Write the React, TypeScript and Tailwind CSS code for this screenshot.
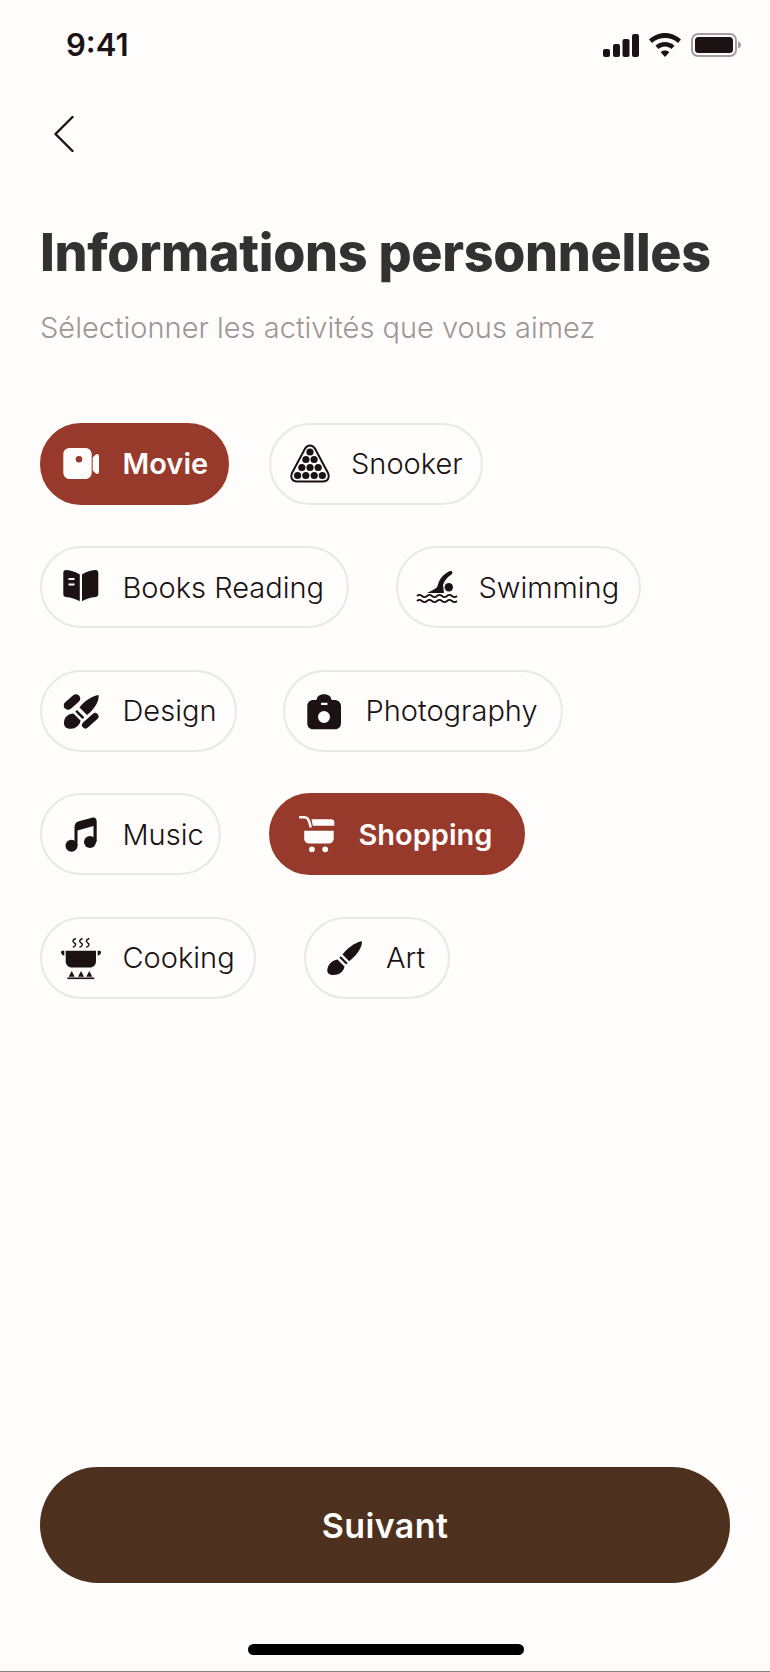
import React from "react";

const INK = "#1a1213";
const BG = "#fefdfc";

function Svg({ children }: { children: React.ReactNode }) {
  return (
    <svg width="40" height="40" viewBox="0 0 40 40" className="shrink-0 overflow-visible" aria-hidden="true">
      {children}
    </svg>
  );
}

const MovieIcon = () => (
  <Svg>
    <path fillRule="evenodd" fill={BG} d="M9 4H24C28 4 30.7 6.7 30.7 10.500V28.500C30.700 32.300 28 35 24 35H9C5 35 2.300 32.300 2.300 28.500V10.500C2.300 6.700 5 4 9 4ZM18 12A3.300 3.300 0 1 0 18 18.600A3.300 3.300 0 1 0 18 12Z" />
    <path fill={BG} d="M31.700 13.500L34.500 10.800C36.500 9.200 38 10.300 38 12.500V27.500C38 29.700 36.500 30.800 34.500 29.200L31.700 26.500Z" />
  </Svg>
);

const SnookerIcon = () => {
  const rows = [
    { y: 8, xs: [20] },
    { y: 15.5, xs: [15.9, 24.1] },
    { y: 23.5, xs: [11.800, 20, 28.200] },
    { y: 31.5, xs: [7.600, 15.800, 24.200, 32.400] },
  ];
  return (
    <Svg>
      <path fill="none" stroke={INK} strokeWidth="2" d="M20 1.500C17.500 1.500 15.800 3.200 14.800 5L2 29C0 33 2 37.500 7 37.500H33C38 37.500 40 33 38 29L25.200 5C24.200 3.200 22.500 1.500 20 1.500Z" />
      {rows.map((r) => r.xs.map((x) => <circle key={`${x}-${r.y}`} cx={x} cy={r.y} r="3.600" fill={INK} />))}
    </Svg>
  );
};

const BookIcon = () => (
  <Svg>
    <path fillRule="evenodd" fill={INK} d="M5.500 3C10 3.500 15 5 18.800 7.500V34.300C15 32 10 30.500 5 30C3.300 29.800 2.300 28.800 2.300 27V6C2.300 4 3.500 2.800 5.500 3ZM7.500 11V13H13.500V11ZM7.500 16.500V18.500H13.500V16.500Z" />
    <path fill={INK} d="M34.100 3C29.500 3.500 24.500 5 21 7.500V34.300C24.500 32 29.500 30.500 34.500 30C36.300 29.800 37.300 28.800 37.300 27V6C37.300 4 36 2.800 34.100 3Z" />
  </Svg>
);

const SwimIcon = () => (
  <Svg>
    <circle cx="31.800" cy="20.300" r="4.200" fill={INK} />
    <path fill={INK} d="M34.500 7.500C31 9.500 27.500 13 26 18L27 26H10L16 23C19 21.500 20.500 20 21 17.500C22.500 12 26 7.500 32 4.500C35 3 36.500 6 34.500 7.500Z" />
    <path fill="none" stroke={INK} strokeWidth="1.800" d="M0 29Q2.500 26.800 5 29T10 29T15 29T20 29T25 29T30 29T35 29T40 29" />
    <path fill="none" stroke={INK} strokeWidth="1.800" d="M0 34Q2.500 31.800 5 34T10 34T15 34T20 34T25 34T30 34T35 34T40 34" />
  </Svg>
);

const DesignIcon = () => (
  <Svg>
    <path stroke={INK} strokeWidth="8.500" strokeLinecap="round" d="M7 14.500L15 7.500" />
    <path stroke={INK} strokeWidth="7" strokeLinecap="round" d="M24.500 34L34 25.500" />
    <path fill={INK} d="M37.500 4C38.500 10 33.500 18 26 24L18.500 16.500C23 10 31 5 37.500 4Z" />
    <path fill={INK} d="M16 19L23.300 26.300L21.500 28L14.300 20.800Z" />
    <path fill={INK} d="M12.500 22.500L19.500 29.500C19 34 15 37.800 9.500 37.800C5 37.800 2.500 35 3 31C3.500 26 7.500 22.500 12.500 22.500Z" />
  </Svg>
);

const CameraIcon = () => (
  <Svg>
    <path fillRule="evenodd" fill={INK} d="M12.500 9C13 5.500 15.500 3.300 20 3.300C24.500 3.300 27 5.500 27.500 9H30.500C34.500 9 37 11.500 37 15.500V32C37 36 34.500 38.300 30.500 38.300H9.500C5.500 38.300 3.300 36 3.300 32V15.500C3.300 11.500 5.500 9 9.500 9ZM17 11.700V14H23.500V11.700ZM20 20A6 6 0 1 0 20 32A6 6 0 1 0 20 20Z" />
  </Svg>
);

const MusicIcon = () => (
  <Svg>
    <circle cx="10.500" cy="31.800" r="6" fill={INK} />
    <circle cx="29" cy="28" r="6" fill={INK} />
    <path fill={INK} d="M13.500 13C13.500 10 15 8 18 7.200L31 3.700C33.800 3 35.700 4.500 35.700 7.200V28H32.500V12L16.500 16.500V32H13.500Z" />
  </Svg>
);

const CartIcon = () => (
  <Svg>
    <path fill="none" stroke={BG} strokeWidth="2.600" strokeLinecap="round" d="M3.200 3.300H7.500C10 3.300 11.500 5 12.500 8.500L13.500 12.500" />
    <path fill={BG} d="M14.500 5.300H34.200C36.200 5.300 37.300 6.500 37.300 8.500V11.700H15.800Z" />
    <path fill={BG} d="M7.200 16.700H36.700V24.500C36.700 27.500 34.500 29.500 31.500 29.500H12.500C9.500 29.500 7.200 27.500 7.200 24.500Z" />
    <circle cx="14.900" cy="35.300" r="2.900" fill={BG} />
    <circle cx="28.200" cy="35.300" r="2.900" fill={BG} />
  </Svg>
);

const PotIcon = () => (
  <Svg>
    {[13.300, 20, 26.700].map((x) => (
      <path key={x} fill="none" stroke={INK} strokeWidth="1.400" d={`M${x + 1.500} 0.500C${x - 2} 2 ${x - 2} 3.500 ${x} 4.800C${x + 2} 6 ${x + 2} 7.500 ${x - 1.500} 9.300`} />
    ))}
    <path fill={INK} d="M4.700 12.700H35V23C35 27 32.500 29.500 28.500 29.500H11C7.300 29.500 4.700 27 4.700 23Z" />
    <path fill={INK} d="M0 14C0 13 .8 12.700 3.300 12.700V17.500C1.500 17.500 0 16 0 14ZM40 14C40 13 39.200 12.700 36.700 12.700V17.500C38.500 17.500 40 16 40 14Z" />
    {[10.700, 20, 28.300].map((x) => (
      <path key={x} fill={INK} d={`M${x} 33L${x + 3} 38.700H${x - 3}Z`} />
    ))}
    <path stroke={INK} strokeWidth="1.600" d="M6.300 40.300H33.300" />
  </Svg>
);

const BrushIcon = () => (
  <Svg>
    <path fill={INK} d="M36 3.300C37 3.300 37 4.500 36.800 6C35.500 12 30.500 18.500 24.200 23.200L17.500 16.500C22 10.500 29.500 5 36 3.300Z" />
    <path fill={INK} d="M15.800 18.200L22.700 25L21.200 26.500L14.300 19.700Z" />
    <path fill={INK} d="M12.500 21.500L19.500 28.500C18.800 33.500 14 37 8.500 37C4.500 37 2 35.500 2.300 32C2.700 27 7 22 12.500 21.500Z" />
  </Svg>
);

type ChipProps = {
  icon: React.ReactNode;
  label: string;
  widthClass: string;
  selected?: boolean;
  wide?: boolean;
};

function Chip({ icon, label, widthClass, selected, wide }: ChipProps) {
  return (
    <div
      className={`flex h-[82px] items-center rounded-full border-2 ${widthClass} ${wide ? "pl-[26px]" : "pl-[19px]"} ${
        selected
          ? "border-[#97392b] bg-[#97392b] text-[#fefdfc]"
          : "border-[#e9e8e6] text-[#1a1213]"
      }`}
    >
      {icon}
      <span
        className={`ml-[21.5px] whitespace-nowrap text-[29px] leading-none font-['Inter',sans-serif] ${
          selected ? "font-semibold" : "font-light"
        }`}
      >
        {label}
      </span>
    </div>
  );
}

export default function App() {
  return (
    <div className="flex h-[1672px] w-[770px] flex-col overflow-hidden border-b border-[#85837e] bg-[#fefdfc]">
      <div className="flex items-center justify-between pl-[66px] pr-[29px] pt-[27px]">
        <span className="text-[31px] leading-[36px] font-semibold text-[#1a1213] font-['Inter',sans-serif]">9:41</span>
        <div className="flex items-center gap-[10px]">
          <svg width="36" height="23" viewBox="0 0 36 23" aria-hidden="true">
            <rect x="0" y="15" width="7" height="8" rx="2" fill={INK} />
            <rect x="10" y="10" width="7" height="13" rx="2" fill={INK} />
            <rect x="19.500" y="5" width="7" height="18" rx="2" fill={INK} />
            <rect x="29" y="0" width="7" height="23" rx="2" fill={INK} />
          </svg>
          <svg width="32" height="24" viewBox="0 0 32 24" aria-hidden="true">
            <path fill={INK} d="M16 0C22 0 27.500 2.500 32 6.500L29 10C25.500 6.800 21 5 16 5C11 5 6.500 6.800 3 10L0 6.500C4.500 2.500 10 0 16 0Z" />
            <path fill={INK} d="M16 9C19.500 9 22.800 10.300 25.500 12.700L22.500 16C20.700 14.500 18.500 13.500 16 13.500C13.500 13.500 11.300 14.500 9.500 16L6.500 12.700C9.200 10.300 12.500 9 16 9Z" />
            <path fill={INK} d="M16 17.500C17.800 17.500 19.200 18 20.300 19.200L16 24L11.700 19.200C12.800 18 14.200 17.500 16 17.500Z" />
          </svg>
          <svg width="50" height="24" viewBox="0 0 50 24" aria-hidden="true">
            <rect x="1" y="1" width="44" height="22" rx="6" fill="none" stroke="#a79d9d" strokeWidth="2" />
            <rect x="4" y="4" width="38" height="16" rx="3.500" fill={INK} />
            <path fill="#a79d9d" d="M47 8.500C48.800 9 50 10.300 50 12C50 13.700 48.800 15 47 15.500Z" />
          </svg>
        </div>
      </div>

      <div className="pl-[54px] pt-[53px]">
        <svg width="20" height="36" viewBox="0 0 20 36" aria-hidden="true">
          <path d="M18.500 1L1.500 18L18.500 35" fill="none" stroke={INK} strokeWidth="2.400" strokeLinecap="round" strokeLinejoin="round" />
        </svg>
      </div>

      <h1 className="mt-[69px] pl-[40px] whitespace-nowrap text-[52px] leading-[64px] font-extrabold tracking-[-0.3px] text-[#323232] font-['Inter',sans-serif]">
        Informations personnelles
      </h1>
      <p className="mt-[25px] pl-[40px] whitespace-nowrap text-[29px] leading-[36px] font-light text-[#9e9595] font-['Inter',sans-serif]">
        Sélectionner les activités que vous aimez
      </p>

      <div className="mt-[76.5px] flex flex-col gap-[41.5px] pl-[40px]">
        <div className="flex gap-[39.5px]">
          <Chip icon={<MovieIcon />} label="Movie" widthClass="w-[189px]" selected />
          <Chip icon={<SnookerIcon />} label="Snooker" widthClass="w-[214px]" />
        </div>
        <div className="flex gap-[47px]">
          <Chip icon={<BookIcon />} label="Books Reading" widthClass="w-[309px]" />
          <Chip icon={<SwimIcon />} label="Swimming" widthClass="w-[245px]" />
        </div>
        <div className="flex gap-[46px]">
          <Chip icon={<DesignIcon />} label="Design" widthClass="w-[197px]" />
          <Chip icon={<CameraIcon />} label="Photography" widthClass="w-[280px]" />
        </div>
        <div className="flex gap-[48px]">
          <Chip icon={<MusicIcon />} label="Music" widthClass="w-[181px]" />
          <Chip icon={<CartIcon />} label="Shopping" widthClass="w-[256px]" selected wide />
        </div>
        <div className="flex gap-[47.5px]">
          <Chip icon={<PotIcon />} label="Cooking" widthClass="w-[216px]" />
          <Chip icon={<BrushIcon />} label="Art" widthClass="w-[146px]" />
        </div>
      </div>

      <div className="mt-auto px-[40px]">
        <button className="flex h-[116px] w-full items-center justify-center rounded-full bg-[#4d301d] text-[34px] font-semibold tracking-[0.4px] text-[#fefdfc] font-['Inter',sans-serif]">
          Suivant
        </button>
      </div>
      <div className="mb-[16px] ml-[248px] mt-[61px] h-[11px] w-[276px] rounded-full bg-black" />
    </div>
  );
}
